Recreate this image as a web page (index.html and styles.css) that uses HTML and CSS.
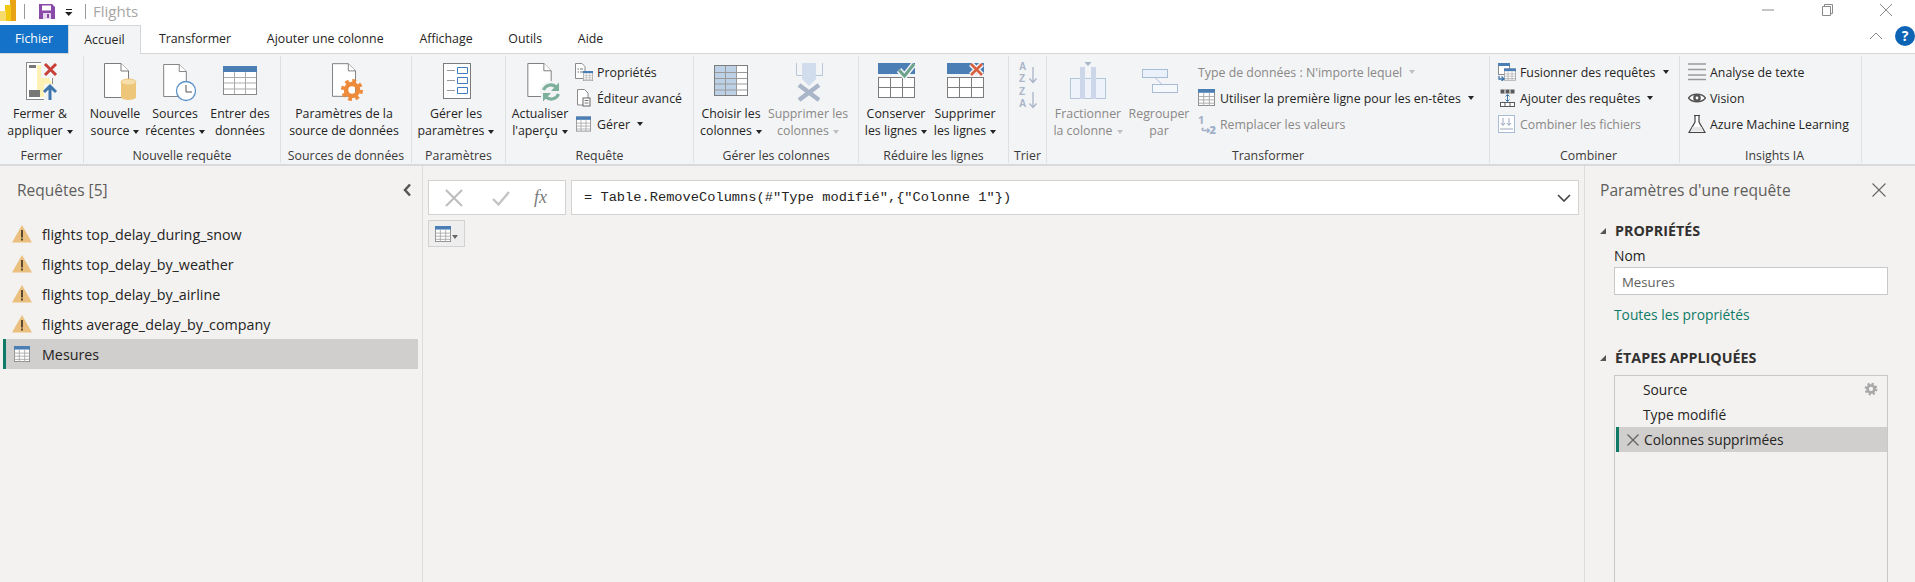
FILE: index.html
```html
<!DOCTYPE html>
<html lang="fr">
<head>
<meta charset="utf-8">
<title>Flights</title>
<link rel="stylesheet" href="styles.css">
</head>
<body>
<svg class="defs" aria-hidden="true">
  <symbol id="doc" viewBox="0 0 25 35"><path d="M.5.5H17L24.5 8V34.5H.5Z" fill="#fff" stroke="#7c7c7c"/><path d="M17 .5V8H24.5" fill="#fff" stroke="#7c7c7c"/></symbol>
  <symbol id="gear" viewBox="0 0 24 24"><circle cx="12" cy="12" r="9" fill="none" stroke="currentColor" stroke-width="4" stroke-dasharray="3.6 3.47"/><circle cx="12" cy="12" r="6" fill="none" stroke="currentColor" stroke-width="4.6"/></symbol>
  <symbol id="tbl" viewBox="0 0 18 18"><rect x=".5" y=".5" width="17" height="17" fill="#fff" stroke="#8a8a8a"/><rect x="0" y="0" width="18" height="4" fill="#4a7eb5"/><path d="M.5 8h17M.5 11.500h17M.5 15h17M6 4v14M12 4v14" stroke="#a8a8a8" fill="none"/></symbol>
  <symbol id="warn" viewBox="0 0 20 18"><path d="M10 0 20 17.500H0Z" fill="#ebbf7e"/><rect x="9" y="5" width="2" height="7.500" fill="#5c4a30"/><rect x="9" y="13.500" width="2" height="2" fill="#5c4a30"/></symbol>
</svg>

<header class="titlebar">
  <div class="qat">
    <svg class="logo" width="16" height="21" viewBox="0 0 16 21"><rect x="10" y="0" width="6" height="21" fill="#e8a317"/><rect x="5" y="5" width="6" height="16" fill="#f2c811"/><rect x="0" y="11" width="6" height="10" fill="#f8dc6b"/></svg>
    <span class="qat-sep"></span>
    <svg class="save" width="16" height="15" viewBox="0 0 16 15"><path d="M0 0H13L16 3V15H0Z" fill="#8a4ba8"/><rect x="3" y="1.500" width="9" height="5" fill="#fff"/><rect x="4" y="9" width="8" height="6" fill="#e6d9ee"/><rect x="8" y="10" width="2" height="4" fill="#8a4ba8"/></svg>
    <svg class="qat-drop" width="8" height="8" viewBox="0 0 8 8"><rect x="1" y="0" width="6" height="1" fill="#222"/><path d="M0 3H7.500L3.750 7Z" fill="#222"/></svg>
    <span class="qat-sep qat-sep-2"></span>
    <span class="app-title">Flights</span>
  </div>
  <div class="winctl">
    <svg width="14" height="14" viewBox="0 0 14 14"><path d="M1 7H13" stroke="#8a8a8a"/></svg>
    <svg width="14" height="14" viewBox="0 0 14 14"><path d="M2.500 3.500H10.500V12.500H2.500ZM4.500 3.500V1.500H12.500V10.500H10.500" fill="none" stroke="#8a8a8a"/></svg>
    <svg width="14" height="14" viewBox="0 0 14 14"><path d="M1 1 13 13M13 1 1 13" stroke="#8a8a8a"/></svg>
  </div>
</header>

<nav class="tabs">
  <span class="tab tab-file">Fichier</span>
  <span class="tab tab-active">Accueil</span>
  <span class="tab">Transformer</span>
  <span class="tab">Ajouter une colonne</span>
  <span class="tab">Affichage</span>
  <span class="tab">Outils</span>
  <span class="tab">Aide</span>
  <span class="tab-tools">
    <svg width="14" height="8" viewBox="0 0 14 8"><path d="M1 7 7 1 13 7" fill="none" stroke="#8a8a8a"/></svg>
    <span class="help">?</span>
  </span>
</nav>

<section class="ribbon">
  <div class="group">
    <div class="group-body">
      <div class="large w80">
        <svg class="licon" viewBox="0 0 48 43"><rect x="10.500" y=".5" width="26" height="37" fill="#fff" stroke="#8a8a8a"/><path d="M21 3H26L36 21 30 35H21Z" fill="#fff0b3"/><rect x="13" y="3" width="7" height="3" fill="#777"/><rect x="13" y="28" width="11" height="7" fill="#777"/><rect x="25" y="0" width="17" height="16" fill="#f3f4f6"/><path d="M29 2 40 13M40 2 29 13" stroke="#c8403a" stroke-width="3"/><rect x="28" y="22" width="14" height="16" fill="#f3f4f6"/><path d="M34 38V25M28 30 34 24 40 30" fill="none" stroke="#3f75ad" stroke-width="3"/></svg>
        <span class="lbl">Fermer &amp;<br>appliquer<i class="caret"></i></span>
      </div>
    </div>
    <div class="group-name">Fermer</div>
  </div>

  <div class="group g-nr">
    <div class="group-body">
      <div class="large w62">
        <svg class="licon" viewBox="0 0 48 43"><use href="#doc" x="13" y="1" width="25" height="35"/><path d="M30 20V35C30 37 34 38 37.500 38S45 37 45 35V20Z" fill="#edc67a"/><ellipse cx="37.500" cy="20" rx="7.500" ry="3" fill="#f6dfaa" stroke="#edc67a"/></svg>
        <span class="lbl">Nouvelle<br>source<i class="caret"></i></span>
      </div>
      <div class="large w58">
        <svg class="licon" viewBox="0 0 48 43"><use href="#doc" x="12" y="2" width="24" height="33"/><circle cx="35" cy="29" r="9.500" fill="#fff" stroke="#5b93c9" stroke-width="1.300"/><path d="M35 23V30H41" fill="none" stroke="#555"/></svg>
        <span class="lbl">Sources<br>récentes<i class="caret"></i></span>
      </div>
      <div class="large w72">
        <svg class="licon" viewBox="0 0 48 43"><rect x="7.500" y="4.500" width="33" height="28" fill="#fff" stroke="#8a8a8a"/><rect x="7" y="4" width="34" height="6" fill="#4a7eb5"/><path d="M8 15.500H40M8 21H40M8 27H40M18.500 10V32M29.500 10V32" stroke="#ababab" fill="none"/></svg>
        <span class="lbl">Entrer des<br>données</span>
      </div>
    </div>
    <div class="group-name">Nouvelle requête</div>
  </div>

  <div class="group g-src">
    <div class="group-body">
      <div class="large w126">
        <svg class="licon" viewBox="0 0 48 43"><use href="#doc" x="12" y="1" width="24" height="34"/><use href="#gear" class="c-orange" x="20" y="16" width="24" height="24"/></svg>
        <span class="lbl">Paramètres de la<br>source de données</span>
      </div>
    </div>
    <div class="group-name">Sources de données</div>
  </div>

  <div class="group g-par">
    <div class="group-body">
      <div class="large w88">
        <svg class="licon" viewBox="0 0 48 43"><rect x="11.500" y="1.500" width="27" height="35" fill="#fff" stroke="#7c7c7c"/><path d="M15 8.500H23M15 18.500H23M15 28.500H23" stroke="#9a9a9a" fill="none"/><path d="M25.500 5.500H35.500V11.500H25.500ZM25.500 15.500H35.500V21.500H25.500ZM25.500 25.500H35.500V31.500H25.500Z" fill="#fff" stroke="#3f7cbb"/></svg>
        <span class="lbl">Gérer les<br>paramètres<i class="caret"></i></span>
      </div>
    </div>
    <div class="group-name">Paramètres</div>
  </div>

  <div class="group g-req">
    <div class="group-body">
      <div class="large w68">
        <svg class="licon" viewBox="0 0 48 43"><use href="#doc" x="11" y="1" width="25" height="34"/><circle cx="35" cy="30" r="11" fill="#f3f4f6"/><path d="M27.500 28A7.800 7.800 0 0 1 40 25M42.500 32A7.800 7.800 0 0 1 30 35" fill="none" stroke="#7cb09b" stroke-width="3.200"/><path d="M43 20.500V29H35ZM27 39.500V31H35Z" fill="#7cb09b"/></svg>
        <span class="lbl">Actualiser<br>l'aperçu<i class="caret"></i></span>
      </div>
      <div class="small-col mt1">
        <div class="small"><svg class="sicon" viewBox="0 0 18 18"><path d="M.5.5H7L10 3.500V15.500H.5Z" fill="#fff" stroke="#8a8a8a"/><path d="M2.500 6H4M5 6H8M2.500 9H4M5 9H8" stroke="#777"/><use href="#tbl" x="8" y="8" width="10" height="10"/></svg><span>Propriétés</span></div>
        <div class="small"><svg class="sicon" viewBox="0 0 18 18"><path d="M2.500.5H9.500L13 4V16H2.500Z" fill="#fff" stroke="#8a8a8a"/><rect x="8" y="9" width="7" height="8" fill="#fff" stroke="#666"/><path d="M9.500 11.500H13.500M9.500 14H13.500" stroke="#777"/></svg><span>Éditeur avancé</span></div>
        <div class="small"><svg class="sicon" viewBox="0 0 18 18"><use href="#tbl" x="1" y="1" width="15" height="16"/></svg><span>Gérer</span><i class="caret caret-wide"></i></div>
      </div>
    </div>
    <div class="group-name">Requête</div>
  </div>

  <div class="group g-col">
    <div class="group-body">
      <div class="large w74">
        <svg class="licon" viewBox="0 0 48 43"><rect x="7.500" y="3.500" width="33" height="30" fill="#fff" stroke="#7c7c7c"/><rect x="8" y="4" width="21" height="29" fill="#bcd0e6"/><path d="M8 10.500H40M8 16.500H40M8 22H40M8 28H40M18.500 4V33M29.500 4V33" stroke="#9a9a9a" fill="none"/></svg>
        <span class="lbl">Choisir les<br>colonnes<i class="caret"></i></span>
      </div>
      <div class="large w80 off">
        <svg class="licon" viewBox="0 0 48 43"><path d="M12.500 1V13.500H38.500V1" fill="none" stroke="#b8c6da"/><path d="M18 1H32V17L25 24 18 17Z" fill="#d1dcec"/><path d="M15 23 35 38M35 23 15 38" stroke="#a9b5c8" stroke-width="4.500"/></svg>
        <span class="lbl">Supprimer les<br>colonnes<i class="caret"></i></span>
      </div>
    </div>
    <div class="group-name">Gérer les colonnes</div>
  </div>

  <div class="group g-lig">
    <div class="group-body">
      <div class="large w74">
        <svg class="licon" viewBox="0 0 48 43"><rect x="6" y="1" width="37" height="11" fill="#4a7eb5"/><rect x="6.500" y="15.500" width="36" height="20" fill="#fff" stroke="#7c7c7c"/><path d="M6 25.500H43M18.500 15.500V36M30.500 15.500V36" stroke="#7c7c7c" fill="none"/><path d="M27 8 32.500 14 42 2" fill="none" stroke="#f3f4f6" stroke-width="6"/><path d="M27 8 32.500 14 42 2" fill="none" stroke="#6ca28e" stroke-width="3"/></svg>
        <span class="lbl">Conserver<br>les lignes<i class="caret"></i></span>
      </div>
      <div class="large w64">
        <svg class="licon" viewBox="0 0 48 43"><rect x="6" y="1" width="37" height="11" fill="#4a7eb5"/><rect x="6.500" y="15.500" width="36" height="20" fill="#fff" stroke="#7c7c7c"/><path d="M6 25.500H43M18.500 15.500V36M30.500 15.500V36" stroke="#7c7c7c" fill="none"/><path d="M30 2 41 13M41 2 30 13" stroke="#f3f4f6" stroke-width="5.500"/><path d="M30 2 41 13M41 2 30 13" stroke="#d9603f" stroke-width="2.600"/></svg>
        <span class="lbl">Supprimer<br>les lignes<i class="caret"></i></span>
      </div>
    </div>
    <div class="group-name">Réduire les lignes</div>
  </div>

  <div class="group g-tri">
    <div class="group-body">
      <div class="sort">
        <div class="sort-item"><span class="sort-az">A<br>Z</span><svg width="8" height="17" viewBox="0 0 8 17"><path d="M4 0V15M.5 11.500 4 15.500 7.500 11.500" fill="none" stroke="#a9b5c8" stroke-width="1.300"/></svg></div>
        <div class="sort-item"><span class="sort-az">Z<br>A</span><svg width="8" height="17" viewBox="0 0 8 17"><path d="M4 0V15M.5 11.500 4 15.500 7.500 11.500" fill="none" stroke="#a9b5c8" stroke-width="1.300"/></svg></div>
      </div>
    </div>
    <div class="group-name">Trier</div>
  </div>

  <div class="group g-tra">
    <div class="group-body">
      <div class="large w82 off">
        <svg class="licon" viewBox="0 0 48 43"><rect x="6.500" y="16.500" width="35" height="20" fill="#eef3fb" stroke="#b8c6da"/><rect x="16" y="5" width="5" height="32" fill="#ccd8ea"/><rect x="27" y="5" width="5" height="32" fill="#ccd8ea"/><path d="M20.500 0H27.500L24 4Z" fill="#a9b5c8"/></svg>
        <span class="lbl">Fractionner<br>la colonne<i class="caret"></i></span>
      </div>
      <div class="large w60 off">
        <svg class="licon" viewBox="0 0 48 43"><rect x="7.500" y="7.500" width="25" height="8" fill="#eaf1fb" stroke="#a9bcd6"/><rect x="17.500" y="22.500" width="25" height="8" fill="#f5f8fd" stroke="#a9bcd6"/><path d="M20 15.500 27 22.500" stroke="#a9bcd6" fill="none"/></svg>
        <span class="lbl">Regrouper<br>par</span>
      </div>
      <div class="small-col mt9">
        <div class="small off"><span>Type de données : N'importe lequel</span><i class="caret caret-wide"></i></div>
        <div class="small"><svg class="sicon" viewBox="0 0 18 18"><use href="#tbl" x="0" y="0" width="17" height="17"/></svg><span>Utiliser la première ligne pour les en-têtes</span><i class="caret caret-wide"></i></div>
        <div class="small off"><span class="sicon num">1<b>↪2</b></span><span>Remplacer les valeurs</span></div>
      </div>
    </div>
    <div class="group-name">Transformer</div>
  </div>

  <div class="group g-com">
    <div class="group-body">
      <div class="small-col">
        <div class="small"><svg class="sicon" viewBox="0 0 18 18"><rect x=".5" y=".5" width="11" height="11" fill="#fff" stroke="#8a8a8a"/><rect x="0" y="0" width="12" height="3" fill="#4a7eb5"/><use href="#tbl" x="6" y="5" width="12" height="13"/><path d="M1 13V16H5M3.500 13.500 6 16 3.500 18" fill="none" stroke="#3f75ad" stroke-width="1.300"/></svg><span>Fusionner des requêtes</span><i class="caret caret-wide"></i></div>
        <div class="small"><svg class="sicon" viewBox="0 0 18 18"><rect x="2.500" y=".5" width="14" height="4" fill="#5a5a5a"/><path d="M7 .5V4.500M12 .5V4.500" stroke="#fff"/><rect x="2.500" y="13.500" width="14" height="4" fill="#fff" stroke="#5a5a5a"/><path d="M7 13.500V17.500M12 13.500V17.500" stroke="#5a5a5a"/><path d="M9.500 5.500V12.500M7.500 7.500 9.500 5.500 11.500 7.500M7.500 10.500 9.500 12.500 11.500 10.500" fill="none" stroke="#3f75ad"/></svg><span>Ajouter des requêtes</span><i class="caret caret-wide"></i></div>
        <div class="small off"><svg class="sicon" viewBox="0 0 18 18"><rect x=".5" y=".5" width="16" height="17" fill="#fff" stroke="#a9bcd6"/><path d="M5 3V10M3 8 5 10.500 7 8M11 3V10M9 8 11 10.500 13 8M2 14H15" fill="none" stroke="#9aa8be"/></svg><span>Combiner les fichiers</span></div>
      </div>
    </div>
    <div class="group-name">Combiner</div>
  </div>

  <div class="group g-ins">
    <div class="group-body">
      <div class="small-col">
        <div class="small"><svg class="sicon" viewBox="0 0 18 18"><path d="M0 1H18M0 6.500H18M0 12H18M0 16.500H18" stroke="#9a9a9a" stroke-width="1.300"/></svg><span>Analyse de texte</span></div>
        <div class="small"><svg class="sicon" viewBox="0 0 18 18"><path d="M.5 9C4 4 14 4 17.500 9 14 14 4 14 .5 9Z" fill="#fff" stroke="#555" stroke-width="1.400"/><circle cx="9" cy="9" r="3.800" fill="#555"/><circle cx="9" cy="9" r="1.400" fill="#fff"/></svg><span>Vision</span></div>
        <div class="small"><svg class="sicon" viewBox="0 0 18 18"><path d="M6 .5H12M7 .5V7L1 17.500H17L11 7V.5" fill="#fff" stroke="#444" stroke-width="1.200"/><path d="M4.500 12H13.500L15.500 16.500H2.500Z" fill="#e6e6e6"/></svg><span>Azure Machine Learning</span></div>
      </div>
    </div>
    <div class="group-name">Insights IA</div>
  </div>
</section>

<main class="main">
  <aside class="queries">
    <div class="q-head">
      <span class="q-title">Requêtes [5]</span>
      <svg width="9" height="14" viewBox="0 0 9 14"><path d="M7 1.500 2 7 7 12.500" fill="none" stroke="#555" stroke-width="2.500"/></svg>
    </div>
    <ul class="q-list">
      <li class="q-row"><svg class="q-icon" viewBox="0 0 20 18"><use href="#warn"/></svg>flights top_delay_during_snow</li>
      <li class="q-row"><svg class="q-icon" viewBox="0 0 20 18"><use href="#warn"/></svg>flights top_delay_by_weather</li>
      <li class="q-row"><svg class="q-icon" viewBox="0 0 20 18"><use href="#warn"/></svg>flights top_delay_by_airline</li>
      <li class="q-row"><svg class="q-icon" viewBox="0 0 20 18"><use href="#warn"/></svg>flights average_delay_by_company</li>
      <li class="q-row q-sel"><svg class="q-icon" viewBox="0 0 20 18"><use href="#tbl" x="2" y="1" width="16" height="16"/></svg>Mesures</li>
    </ul>
  </aside>

  <section class="center">
    <div class="formula">
      <div class="fx-box">
        <svg class="fx-x" width="18" height="18" viewBox="0 0 18 18"><path d="M1 1 17 17M17 1 1 17" stroke="#bdbdbd" stroke-width="2"/></svg>
        <svg class="fx-c" width="18" height="16" viewBox="0 0 18 16"><path d="M1 9 6.500 14.500 17 2" fill="none" stroke="#c4c4c4" stroke-width="2.400"/></svg>
        <span class="fx">fx</span>
      </div>
      <div class="fx-input">
        <span class="code">= Table.RemoveColumns(#"Type modifié",{"Colonne 1"})</span>
        <svg width="14" height="8" viewBox="0 0 14 8"><path d="M1 1 7 7 13 1" fill="none" stroke="#444" stroke-width="1.600"/></svg>
      </div>
    </div>
    <div class="tbl-btn">
      <svg width="16" height="16" viewBox="0 0 18 18"><use href="#tbl"/></svg>
      <i class="tbl-caret"></i>
    </div>
  </section>

  <aside class="settings">
    <div class="s-head">
      <span class="s-title">Paramètres d'une requête</span>
      <svg width="14" height="14" viewBox="0 0 14 14"><path d="M.5.5 13.500 13.500M13.500.5 .5 13.500" stroke="#666" stroke-width="1.100"/></svg>
    </div>
    <h2 class="s-sec"><i class="tri"></i>PROPRIÉTÉS</h2>
    <div class="s-body">
      <div class="s-label">Nom</div>
      <div class="s-input">Mesures</div>
      <div class="s-link">Toutes les propriétés</div>
    </div>
    <h2 class="s-sec s-sec-2"><i class="tri"></i>ÉTAPES APPLIQUÉES</h2>
    <ul class="steps">
      <li class="step">Source<svg class="step-gear" width="14" height="14" viewBox="0 0 24 24"><use href="#gear"/></svg></li>
      <li class="step">Type modifié</li>
      <li class="step step-sel"><svg class="step-x" width="12" height="12" viewBox="0 0 12 12"><path d="M.5.5 11.500 11.500M11.500.5 .5 11.500" stroke="#666" stroke-width="1.400"/></svg>Colonnes supprimées</li>
    </ul>
  </aside>
</main>
</body>
</html>
```
FILE: styles.css
```css
* { box-sizing: border-box; }
html, body { margin: 0; padding: 0; }
body {
  width: 1915px; height: 582px; overflow: hidden;
  background: #f3f2f1; color: #252423;
  font-family: "Open Sans", "Liberation Sans", sans-serif; font-size: 12.35px;
  display: flex; flex-direction: column;
}
.defs { position: absolute; width: 0; height: 0; }
ul { list-style: none; margin: 0; padding: 0; }
i { font-style: normal; }

/* title bar */
.titlebar { height: 25px; background: #fff; display: flex; justify-content: space-between; flex: none; }
.qat { display: flex; align-items: flex-start; }
.logo { display: block; }
.qat-sep { width: 1px; height: 15px; background: #9a9a9a; margin: 4px 0 0 8px; }
.save { margin: 4px 0 0 14px; }
.qat-drop { margin: 9px 0 0 10px; }
.qat-sep-2 { margin-left: 12px; }
.app-title { margin: 0 0 0 7px; font-size: 15px; line-height: 22px; color: #a6a6a6; }
.winctl { display: flex; gap: 45px; padding: 3px 22px 0 0; align-items: flex-start; }

/* tabs */
.tabs { height: 29px; flex: none; background: #fff; display: flex; border-bottom: 1px solid #d5d6d8; position: relative; }
.tab { padding: 0 17.900px; line-height: 28px; white-space: nowrap; }
.tab-file { background: #1473c8; color: #fff; width: 68px; padding: 0; text-align: center; }
.tab-active { width: 73px; padding: 0; text-align: center; background: #f3f4f6; height: 29px; border: 1px solid #d5d6d8; border-bottom: 0; position: relative; z-index: 1; }
.tab-tools { margin-left: auto; display: flex; align-items: center; gap: 12px; padding: 0 0 6px; height: 28px; }
.help { width: 20px; height: 20px; border-radius: 50%; background: #0d63b4; color: #fff; font-weight: 700; font-size: 14px; line-height: 20px; text-align: center; }

/* ribbon */
.ribbon { height: 112px; flex: none; background: #f3f4f6; border-bottom: 2px solid #d9dadc; display: flex; padding: 2px 0 1px; }
.group { display: flex; flex-direction: column; border-right: 1px solid #dfe0e2; flex: none; width: 84px; }
.g-nr { width: 197px; } .g-src { width: 131px; } .g-par { width: 94px; } .g-req { width: 188px; }
.g-col { width: 165px; } .g-lig { width: 150px; } .g-tri { width: 38px; } .g-tra { width: 443px; }
.g-com { width: 190px; padding-left: 8px; } .g-ins { width: 182px; padding-left: 8px; }
.group-body { flex: 1; display: flex; min-height: 0; }
.group-name { height: 17px; line-height: 19px; text-align: center; color: #3b3a39; white-space: nowrap; }
.large { flex: none; padding-top: 6px; display: flex; flex-direction: column; align-items: center; }
.w58 { width: 58px; } .w60 { width: 60px; } .w62 { width: 62px; } .w64 { width: 64px; } .w68 { width: 68px; }
.w72 { width: 72px; } .w74 { width: 74px; } .w80 { width: 80px; } .w82 { width: 82px; } .w88 { width: 88px; } .w126 { width: 126px; }
.licon { width: 48px; height: 43px; display: block; flex: none; }
.lbl { line-height: 17px; text-align: center; white-space: nowrap; }
.caret { display: inline-block; vertical-align: middle; margin-left: 4px; width: 0; height: 0; border: 3.500px solid transparent; border-top: 4px solid #252423; border-bottom: 0; }
.caret-wide { margin-left: 3px; }
.off { color: #8a8886; }
.off .caret { border-top-color: #c0c0c0; }
.small-col { padding-top: 3px; display: flex; flex-direction: column; }
.mt1 { margin-left: 1px; } .mt9 { margin-left: 9px; }
.small { height: 26px; display: flex; align-items: center; gap: 4px; white-space: nowrap; }
.sicon { width: 18px; height: 18px; flex: none; display: block; }
.num { font-size: 11px; line-height: 10px; font-weight: 700; color: #9fb0c8; }
.num b { display: block; text-align: right; font-size: 11px; }
.sort { width: 37px; padding: 5px 0 0 10px; display: flex; flex-direction: column; gap: 2px; }
.sort-item { display: flex; align-items: flex-end; height: 23px; }
.sort-az { font-family: "Liberation Sans", sans-serif; font-size: 10px; line-height: 11.500px; font-weight: 700; color: #a9b5c8; width: 10px; }
.c-orange { color: #ee8b3a; }

/* main */
.main { flex: 1; min-height: 0; display: flex; }
.queries { width: 423px; flex: none; border-right: 1px solid #dcdcdc; }
.q-head { height: 48px; padding: 12px 11px 0 17px; display: flex; justify-content: space-between; align-items: flex-start; margin-bottom: 5px; }
.q-title { font-size: 15.500px; line-height: 24px; color: #605e5c; }
.q-head svg { margin-top: 5px; margin-right: -1px; }
.q-row { height: 30px; margin: 0 4px 0 3px; padding-left: 9px; display: flex; align-items: center; gap: 10px; font-size: 14.300px; white-space: nowrap; }
.q-icon { width: 20px; height: 18px; flex: none; }
.q-sel { background: #d0cfcd; border-left: 3px solid #0f7b66; padding-left: 6px; height: 30px; }

.center { flex: 1; min-width: 0; padding: 14px 5px 0; }
.formula { display: flex; gap: 5px; height: 35px; }
.fx-box { width: 138px; flex: none; background: #fff; border: 1px solid #d2d2d2; display: flex; align-items: center; padding-left: 16px; }
.fx-c { margin-left: 29px; }
.fx { font-family: "Liberation Serif", serif; font-style: italic; font-size: 18px; color: #7a7a7a; margin-left: 24px; }
.fx-input { flex: 1; background: #fff; border: 1px solid #d2d2d2; display: flex; align-items: center; justify-content: space-between; padding: 0 7px 0 12px; }
.code { font-family: "Liberation Mono", monospace; font-size: 13.700px; color: #252423; white-space: pre; }
.tbl-btn { width: 37px; height: 27px; margin-top: 5px; border: 1px solid #d2d2d2; background: #eeeeee; display: flex; align-items: center; padding-left: 6px; gap: 1px; }
.tbl-caret { width: 0; height: 0; border: 3.500px solid transparent; border-top: 4px solid #666; border-bottom: 0; margin-top: 7px; }

.settings { width: 331px; flex: none; border-left: 1px solid #dcdcdc; padding-left: 15px; display: flex; flex-direction: column; }
.s-head { height: 48px; padding: 12px 29px 0 0; display: flex; justify-content: space-between; align-items: flex-start; }
.s-head svg { margin-top: 5px; }
.s-title { font-size: 15.600px; line-height: 24px; color: #605e5c; }
.s-sec { margin: 7px 0 0; height: 20px; font-size: 14.300px; line-height: 20px; font-weight: 700; color: #323130; display: flex; align-items: center; white-space: nowrap; }
.s-sec-2 { margin-top: 23px; }
.tri { width: 0; height: 0; border-style: solid; border-width: 0 0 6px 6px; border-color: transparent transparent #555 transparent; margin-right: 9px; }
.s-body { padding-left: 14px; }
.s-label { font-size: 13.800px; line-height: 20px; margin-top: 5px; }
.s-input { width: 274px; height: 28px; margin-top: 1px; background: #fff; border: 1px solid #c8c8c8; padding-left: 7px; line-height: 28px; font-size: 13.200px; color: #605e5c; }
.s-link { margin-top: 10px; line-height: 20px; font-size: 13.800px; color: #0f7b66; }
.steps { flex: 1; width: 274px; margin: 7px 0 0 14px; border: 1px solid #c8c8c8; border-bottom: 0; padding-top: 1px; }
.step { height: 25px; padding-left: 28px; display: flex; align-items: center; font-size: 13.800px; position: relative; white-space: nowrap; }
.step-gear { position: absolute; right: 9px; top: 5px; color: #a8a8a8; }
.step-sel { background: #d0cfcd; border-left: 3px solid #0f7b66; margin-left: 1px; padding-left: 8px; gap: 5px; }
```
